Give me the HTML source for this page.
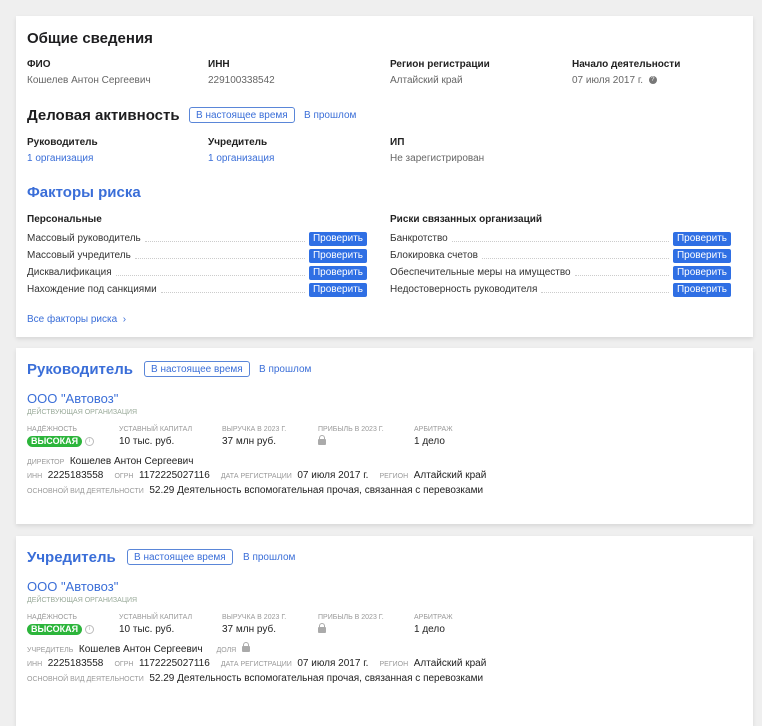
<!DOCTYPE html>
<html><head><meta charset="utf-8"><style>
*{margin:0;padding:0;box-sizing:border-box}
body{width:762px;height:710px;background:#efefef;font-family:"Liberation Sans",sans-serif;position:relative;overflow:hidden;color:#222}
.card{position:absolute;left:16px;width:737px;background:#fff;box-shadow:0 2px 4px rgba(0,0,0,.1)}
.a{position:absolute;white-space:nowrap}
.h{font-size:15px;font-weight:bold;color:#1d1d1f}
.hb{font-size:15px;font-weight:bold;color:#3a6ed8}
.lb{font-size:10px;font-weight:bold;color:#222}
.v{font-size:10px;color:#666}
.lk{font-size:10px;color:#3a6ed8}
.tab{font-size:10px;color:#3a6ed8;border:1px solid #5a86d8;border-radius:3px;padding:1px 6px;height:16px;line-height:13px}
.row{position:absolute;height:12px;font-size:10px;color:#333;display:flex;align-items:flex-end}
.row .d{flex:1;border-bottom:1px dotted #ccc;margin:0 4px 2px}
.btn{position:absolute;background:#2f6fe4;color:#fff;font-size:10px;border-radius:2px;width:58px;height:14px;line-height:14px;text-align:center}
.sm{font-size:7px;color:#999;text-transform:uppercase}
.bv{font-size:10px;color:#222}
.badge{display:inline-block;background:#2cb53b;color:#fff;font-size:9px;font-weight:bold;border-radius:6px;padding:0 4px;height:11px;line-height:11px;vertical-align:top}
.info{display:inline-block;width:9px;height:9px;border:1px solid #bbb;border-radius:50%;font-size:6px;color:#bbb;text-align:center;line-height:7px;vertical-align:top;margin:1px 0 0 3px}
.lock{display:inline-block;width:8px;height:6px;background:#aaa;border-radius:1px;position:relative;vertical-align:middle}
.lock:before{content:"";position:absolute;left:1px;top:-4px;width:6px;height:5px;border:1.2px solid #aaa;border-bottom:none;border-radius:3px 3px 0 0;box-sizing:border-box}
</style></head><body>

<div class="card" style="top:16px;height:321px"></div>
<div class="a h" style="left:27px;top:30px">Общие сведения</div>
<div class="a lb" style="left:27px;top:59px">ФИО</div>
<div class="a v" style="left:27px;top:75px">Кошелев Антон Сергеевич</div>
<div class="a lb" style="left:208px;top:59px">ИНН</div>
<div class="a v" style="left:208px;top:75px">229100338542</div>
<div class="a lb" style="left:390px;top:59px">Регион регистрации</div>
<div class="a v" style="left:390px;top:75px">Алтайский край</div>
<div class="a lb" style="left:572px;top:59px">Начало деятельности</div>
<div class="a v" style="left:572px;top:75px">07 июля 2017 г. <span style="display:inline-block;width:8px;height:8px;border-radius:50%;background:#777;color:#fff;font-size:6px;line-height:8px;text-align:center;vertical-align:middle;margin-left:3px">?</span></div>

<div class="a h" style="left:27px;top:107px">Деловая активность</div>
<div class="a tab" style="left:189px;top:107px">В настоящее время</div>
<div class="a lk" style="left:304px;top:110px">В прошлом</div>
<div class="a lb" style="left:27px;top:137px">Руководитель</div>
<div class="a lk" style="left:27px;top:153px">1 организация</div>
<div class="a lb" style="left:208px;top:137px">Учредитель</div>
<div class="a lk" style="left:208px;top:153px">1 организация</div>
<div class="a lb" style="left:390px;top:137px">ИП</div>
<div class="a v" style="left:390px;top:153px">Не зарегистрирован</div>

<div class="a hb" style="left:27px;top:184px">Факторы риска</div>
<div class="a lb" style="left:27px;top:214px">Персональные</div>
<div class="a lb" style="left:390px;top:214px">Риски связанных организаций</div>

<div class="row" style="left:27px;top:232px;width:282px">Массовый руководитель<span class="d"></span></div>
<div class="row" style="left:27px;top:249px;width:282px">Массовый учредитель<span class="d"></span></div>
<div class="row" style="left:27px;top:266px;width:282px">Дисквалификация<span class="d"></span></div>
<div class="row" style="left:27px;top:283px;width:282px">Нахождение под санкциями<span class="d"></span></div>
<div class="btn" style="left:309px;top:232px">Проверить</div>
<div class="btn" style="left:309px;top:249px">Проверить</div>
<div class="btn" style="left:309px;top:266px">Проверить</div>
<div class="btn" style="left:309px;top:283px">Проверить</div>
<div class="row" style="left:390px;top:232px;width:283px">Банкротство<span class="d"></span></div>
<div class="row" style="left:390px;top:249px;width:283px">Блокировка счетов<span class="d"></span></div>
<div class="row" style="left:390px;top:266px;width:283px">Обеспечительные меры на имущество<span class="d"></span></div>
<div class="row" style="left:390px;top:283px;width:283px">Недостоверность руководителя<span class="d"></span></div>
<div class="btn" style="left:673px;top:232px">Проверить</div>
<div class="btn" style="left:673px;top:249px">Проверить</div>
<div class="btn" style="left:673px;top:266px">Проверить</div>
<div class="btn" style="left:673px;top:283px">Проверить</div>
<div class="a lk" style="left:27px;top:314px">Все факторы риска &nbsp;›</div>

<!-- card 2 -->
<div class="card" style="top:348px;height:176px"></div>
<div class="a hb" style="left:27px;top:361px">Руководитель</div>
<div class="a tab" style="left:144px;top:361px">В настоящее время</div>
<div class="a lk" style="left:259px;top:364px">В прошлом</div>
<div class="a" style="left:27px;top:391px;font-size:13px;color:#3a6ed8">ООО "Автовоз"</div>
<div class="a sm" style="left:27px;top:409px;color:#9a9;">Действующая организация</div>
<div class="a sm" style="left:27px;top:426px">Надёжность</div>
<div class="a sm" style="left:119px;top:426px">Уставный капитал</div>
<div class="a sm" style="left:222px;top:426px">Выручка в 2023 г.</div>
<div class="a sm" style="left:318px;top:426px">Прибыль в 2023 г.</div>
<div class="a sm" style="left:414px;top:426px">Арбитраж</div>
<div class="a" style="left:27px;top:436px;line-height:11px"><span class="badge">ВЫСОКАЯ</span><span class="info">i</span></div>
<div class="a bv" style="left:119px;top:436px">10 тыс. руб.</div>
<div class="a bv" style="left:222px;top:436px">37 млн руб.</div>
<div class="a" style="left:318px;top:433px"><span class="lock"></span></div>
<div class="a bv" style="left:414px;top:436px">1 дело</div>
<div class="a bv" style="left:27px;top:456px"><span class="sm">директор</span>&nbsp; Кошелев Антон Сергеевич</div>
<div class="a bv" style="left:27px;top:470px"><span class="sm">инн</span>&nbsp; 2225183558 &nbsp;&nbsp;&nbsp;<span class="sm">огрн</span>&nbsp; 1172225027116 &nbsp;&nbsp;&nbsp;<span class="sm">дата регистрации</span>&nbsp; 07 июля 2017 г. &nbsp;&nbsp;&nbsp;<span class="sm">регион</span>&nbsp; Алтайский край</div>
<div class="a bv" style="left:27px;top:485px"><span class="sm">основной вид деятельности</span>&nbsp; 52.29 Деятельность вспомогательная прочая, связанная с перевозками</div>

<!-- card 3 -->
<div class="card" style="top:536px;height:190px"></div>
<div class="a hb" style="left:27px;top:549px">Учредитель</div>
<div class="a tab" style="left:127px;top:549px">В настоящее время</div>
<div class="a lk" style="left:243px;top:552px">В прошлом</div>
<div class="a" style="left:27px;top:579px;font-size:13px;color:#3a6ed8">ООО "Автовоз"</div>
<div class="a sm" style="left:27px;top:597px;color:#9a9;">Действующая организация</div>
<div class="a sm" style="left:27px;top:614px">Надёжность</div>
<div class="a sm" style="left:119px;top:614px">Уставный капитал</div>
<div class="a sm" style="left:222px;top:614px">Выручка в 2023 г.</div>
<div class="a sm" style="left:318px;top:614px">Прибыль в 2023 г.</div>
<div class="a sm" style="left:414px;top:614px">Арбитраж</div>
<div class="a" style="left:27px;top:624px;line-height:11px"><span class="badge">ВЫСОКАЯ</span><span class="info">i</span></div>
<div class="a bv" style="left:119px;top:624px">10 тыс. руб.</div>
<div class="a bv" style="left:222px;top:624px">37 млн руб.</div>
<div class="a" style="left:318px;top:621px"><span class="lock"></span></div>
<div class="a bv" style="left:414px;top:624px">1 дело</div>
<div class="a bv" style="left:27px;top:644px"><span class="sm">учредитель</span>&nbsp; Кошелев Антон Сергеевич &nbsp;&nbsp;&nbsp;&nbsp;<span class="sm">доля</span>&nbsp; <span class="lock"></span></div>
<div class="a bv" style="left:27px;top:658px"><span class="sm">инн</span>&nbsp; 2225183558 &nbsp;&nbsp;&nbsp;<span class="sm">огрн</span>&nbsp; 1172225027116 &nbsp;&nbsp;&nbsp;<span class="sm">дата регистрации</span>&nbsp; 07 июля 2017 г. &nbsp;&nbsp;&nbsp;<span class="sm">регион</span>&nbsp; Алтайский край</div>
<div class="a bv" style="left:27px;top:673px"><span class="sm">основной вид деятельности</span>&nbsp; 52.29 Деятельность вспомогательная прочая, связанная с перевозками</div>
</body></html>
